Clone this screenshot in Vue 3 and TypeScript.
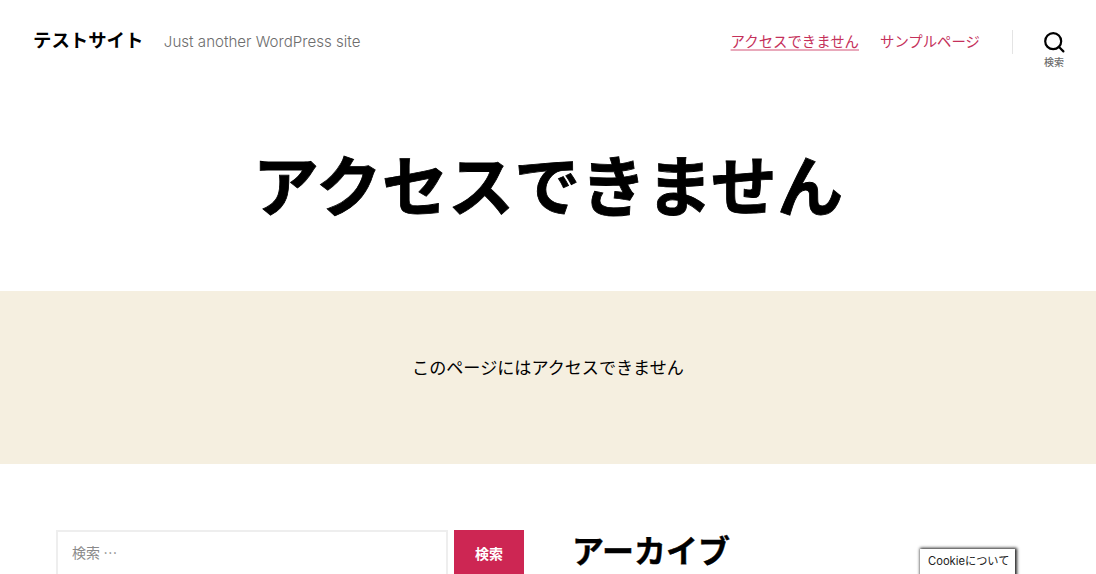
<script setup lang="ts">
const title = 'アクセスできません'
const navItems = [
  { label: 'アクセスできません', current: true },
  { label: 'サンプルページ', current: false },
]
</script>

<template>
  <div class="page">
    <header class="site-header">
      <div class="branding">
        <div class="site-title">テストサイト</div>
        <div class="site-desc">Just another WordPress site</div>
      </div>
      <div class="header-right">
        <nav class="nav">
          <a v-for="item in navItems" :key="item.label" :class="{ current: item.current }" href="#">{{ item.label }}</a>
        </nav>
        <div class="search-toggle">
          <svg width="22" height="22" viewBox="0 0 22 22" fill="none" stroke="#000" stroke-width="2.2">
            <circle cx="10.2" cy="10.2" r="8" />
            <path d="M15.8 15.8 L20.4 20.4" stroke-linecap="round" />
          </svg>
          <span>検索</span>
        </div>
      </div>
    </header>

    <section class="hero">
      <h1>{{ title }}</h1>
    </section>

    <section class="band">
      <p>このページにはアクセスできません</p>
    </section>

    <section class="widgets">
      <form class="search-form" @submit.prevent>
        <input type="search" placeholder="検索 …" />
        <button type="submit">検索</button>
      </form>
      <h2>アーカイブ</h2>
    </section>

    <div class="cookie">Cookieについて</div>
  </div>
</template>

<style>
html, body { margin: 0; height: 574px; overflow: hidden; background: #fff; }
</style>

<style scoped>
.page {
  position: relative;
  height: 574px;
  overflow: hidden;
  font-family: Inter, "Noto Sans CJK JP", sans-serif;
  color: #000;
}
.site-header {
  height: 82px;
  box-sizing: border-box;
  padding: 0 32px 0 33px;
  display: flex;
  justify-content: space-between;
  align-items: center;
}
.branding { display: flex; align-items: center; gap: 20.5px; margin-top: -2px; }
.site-title { font-size: 18.4px; font-weight: 700; line-height: 1; margin-top: 0; }
.site-desc { font-size: 15.1px; font-weight: 300; color: #6d6d6d; margin-top: 2px; }
.header-right { display: flex; align-items: flex-start; height: 82px; }
.nav { display: flex; gap: 21px; padding: 32px 32px 0 0; }
.nav a { font-size: 14.4px; color: #c5305a; text-decoration: none; line-height: 19px; }
.nav a.current { text-decoration: underline; text-underline-offset: 2px; text-decoration-thickness: 1.5px; text-decoration-color: #e9a9bb; }
.search-toggle {
  width: 84px;
  margin-right: -32px;
  padding-top: 31px;
  display: flex;
  flex-direction: column;
  align-items: center;
  gap: 1px;
  position: relative;
  font-size: 10px;
  line-height: 16px;
  font-weight: 500;
  color: #6d6d6d;
}
.search-toggle::before {
  content: "";
  position: absolute;
  left: 0;
  top: 30px;
  height: 24px;
  width: 1px;
  background: #e4e4e4;
}
.hero { height: 209px; display: flex; justify-content: center; }
.hero h1 {
  margin: 62px 0 0;
  font-size: 66.2px;
  font-weight: 700;
  line-height: 86px;
  height: 86px;
  -webkit-text-stroke: 0.8px #000;
}
.band {
  height: 172.5px;
  background: #f5efe0;
  display: flex;
  align-items: center;
  justify-content: center;
}
.band p { margin: 0 0 19px; font-size: 17.1px; line-height: 26px; color: #000; }
.widgets { display: flex; padding: 66px 0 0 56px; }
.search-form { display: flex; gap: 6px; width: 468px; height: 70px; }
.search-form input {
  width: 392px;
  box-sizing: border-box;
  height: 70px;
  border: 2px solid #eeeeee;
  padding: 0 14px 26px;
  font: 14px "Noto Sans CJK JP", sans-serif;
  outline: none;
  background: #fff;
}
.search-form input::placeholder { color: #8a8a8a; }
.search-form button {
  width: 70px;
  height: 70px;
  box-sizing: border-box;
  padding: 0 0 24px;
  border: 0;
  background: #cd2653;
  color: #fff;
  font: 700 14px Inter, "Noto Sans CJK JP", sans-serif;
}
.widgets h2 {
  margin: 0 0 0 48px;
  font-size: 32px;
  line-height: 43px;
  font-weight: 700;
  -webkit-text-stroke: 0.4px #000;
}
.cookie {
  position: absolute;
  left: 919.5px;
  top: 548.5px;
  width: 95px;
  height: 40px;
  box-sizing: border-box;
  padding: 4.5px 8.5px;
  background: #fff;
  box-shadow: 1px 0 3px 1px #222;
  font-size: 11.2px;
  line-height: 16px;
  color: #222;
  white-space: nowrap;
}
</style>
